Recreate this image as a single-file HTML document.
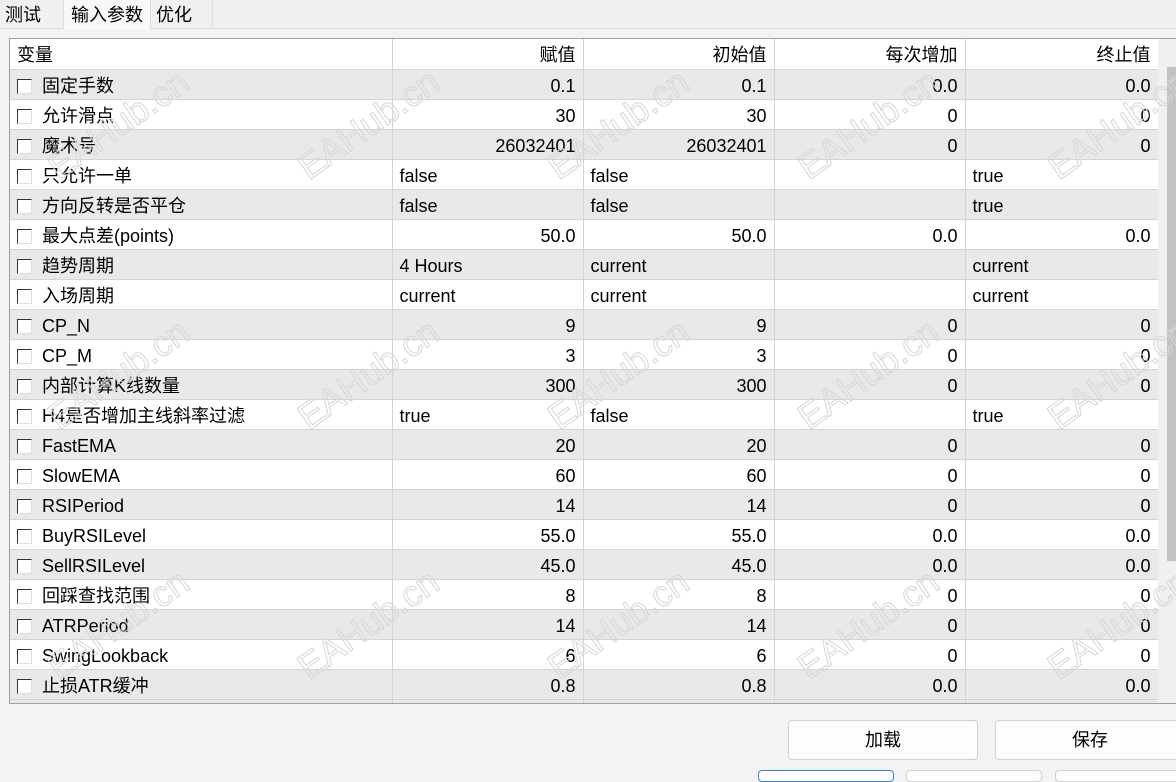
<!DOCTYPE html>
<html><head><meta charset="utf-8"><style>
*{margin:0;padding:0;box-sizing:border-box}
body{width:1176px;height:777px;background:#f3f3f3;font-family:"Liberation Sans","Noto Sans CJK SC",sans-serif;font-size:18px;color:#000;position:relative;overflow:hidden}
.tabs{position:absolute;left:0;top:0;width:1176px;height:29px;background:#f0f0f0;border-bottom:1px solid #e0e0e0}
.tab{position:absolute;top:0;height:29px;line-height:30px;padding-left:5px}
.box{position:absolute;left:9px;top:38px;width:1167px;height:666px;background:#fff;border:1px solid #a0a0a0;border-right:none;overflow:hidden}
table{border-collapse:collapse;position:absolute;left:0;top:0;table-layout:fixed}
tr{height:30px}
td{height:30px;border-right:1px solid #d4d4d4;border-bottom:1px solid #d4d4d4;padding:0 7px;white-space:nowrap;line-height:29px;vertical-align:top}
td>i{font-style:normal;position:relative;top:2px}
tr.g td{background:#e9e9e9}
td.r{text-align:right}
.cb{display:inline-block;width:15px;height:15px;border:1px solid #333;border-right-color:#ddd;border-bottom-color:#ddd;background:#fff;vertical-align:-2px;margin-right:10px}
.sb{position:absolute;left:1148px;top:0;width:19px;height:666px;background:#f0f0f0}
.th{position:absolute;left:1157px;top:28px;width:10px;height:494px;background:#c2c2c2}
.wm{position:absolute;font-size:36px;color:transparent;-webkit-text-stroke:1px #d6d6d6;transform:rotate(-35deg);transform-origin:left bottom;white-space:nowrap;pointer-events:none;font-family:"Liberation Sans",sans-serif}
.btn{position:absolute;top:720px;height:40px;background:#fdfdfd;border:1px solid #d0d0d0;border-radius:4px;text-align:center;line-height:38px}
.bt{position:absolute;top:770px;height:12px;background:#fdfdfd;border:1px solid #d0d0d0;border-radius:4px}
</style></head><body>
<div class="tabs">
<div class="tab" style="left:0;width:62px">测试</div>
<div class="tab" style="left:63px;width:88px;background:#f8f8f8;border-left:1px solid #ddd;border-right:1px solid #ddd;height:30px;padding-left:7px">输入参数</div>
<div class="tab" style="left:151px;width:62px;border-right:1px solid #ddd">优化</div>
</div>
<div class="box">
<table>
<colgroup><col style="width:382px"><col style="width:191px"><col style="width:191px"><col style="width:191px"><col style="width:193px"></colgroup>
<tr><td><i>变量</i></td><td class="r"><i>赋值</i></td><td class="r"><i>初始值</i></td><td class="r"><i>每次增加</i></td><td class="r"><i>终止值</i></td></tr>
<tr class="g"><td><i><span class="cb"></span>固定手数</i></td><td class="r"><i>0.1</i></td><td class="r"><i>0.1</i></td><td class="r"><i>0.0</i></td><td class="r"><i>0.0</i></td></tr>
<tr><td><i><span class="cb"></span>允许滑点</i></td><td class="r"><i>30</i></td><td class="r"><i>30</i></td><td class="r"><i>0</i></td><td class="r"><i>0</i></td></tr>
<tr class="g"><td><i><span class="cb"></span>魔术号</i></td><td class="r"><i>26032401</i></td><td class="r"><i>26032401</i></td><td class="r"><i>0</i></td><td class="r"><i>0</i></td></tr>
<tr><td><i><span class="cb"></span>只允许一单</i></td><td><i>false</i></td><td><i>false</i></td><td></td><td><i>true</i></td></tr>
<tr class="g"><td><i><span class="cb"></span>方向反转是否平仓</i></td><td><i>false</i></td><td><i>false</i></td><td></td><td><i>true</i></td></tr>
<tr><td><i><span class="cb"></span>最大点差(points)</i></td><td class="r"><i>50.0</i></td><td class="r"><i>50.0</i></td><td class="r"><i>0.0</i></td><td class="r"><i>0.0</i></td></tr>
<tr class="g"><td><i><span class="cb"></span>趋势周期</i></td><td><i>4 Hours</i></td><td><i>current</i></td><td></td><td><i>current</i></td></tr>
<tr><td><i><span class="cb"></span>入场周期</i></td><td><i>current</i></td><td><i>current</i></td><td></td><td><i>current</i></td></tr>
<tr class="g"><td><i><span class="cb"></span>CP_N</i></td><td class="r"><i>9</i></td><td class="r"><i>9</i></td><td class="r"><i>0</i></td><td class="r"><i>0</i></td></tr>
<tr><td><i><span class="cb"></span>CP_M</i></td><td class="r"><i>3</i></td><td class="r"><i>3</i></td><td class="r"><i>0</i></td><td class="r"><i>0</i></td></tr>
<tr class="g"><td><i><span class="cb"></span>内部计算K线数量</i></td><td class="r"><i>300</i></td><td class="r"><i>300</i></td><td class="r"><i>0</i></td><td class="r"><i>0</i></td></tr>
<tr><td><i><span class="cb"></span>H4是否增加主线斜率过滤</i></td><td><i>true</i></td><td><i>false</i></td><td></td><td><i>true</i></td></tr>
<tr class="g"><td><i><span class="cb"></span>FastEMA</i></td><td class="r"><i>20</i></td><td class="r"><i>20</i></td><td class="r"><i>0</i></td><td class="r"><i>0</i></td></tr>
<tr><td><i><span class="cb"></span>SlowEMA</i></td><td class="r"><i>60</i></td><td class="r"><i>60</i></td><td class="r"><i>0</i></td><td class="r"><i>0</i></td></tr>
<tr class="g"><td><i><span class="cb"></span>RSIPeriod</i></td><td class="r"><i>14</i></td><td class="r"><i>14</i></td><td class="r"><i>0</i></td><td class="r"><i>0</i></td></tr>
<tr><td><i><span class="cb"></span>BuyRSILevel</i></td><td class="r"><i>55.0</i></td><td class="r"><i>55.0</i></td><td class="r"><i>0.0</i></td><td class="r"><i>0.0</i></td></tr>
<tr class="g"><td><i><span class="cb"></span>SellRSILevel</i></td><td class="r"><i>45.0</i></td><td class="r"><i>45.0</i></td><td class="r"><i>0.0</i></td><td class="r"><i>0.0</i></td></tr>
<tr><td><i><span class="cb"></span>回踩查找范围</i></td><td class="r"><i>8</i></td><td class="r"><i>8</i></td><td class="r"><i>0</i></td><td class="r"><i>0</i></td></tr>
<tr class="g"><td><i><span class="cb"></span>ATRPeriod</i></td><td class="r"><i>14</i></td><td class="r"><i>14</i></td><td class="r"><i>0</i></td><td class="r"><i>0</i></td></tr>
<tr><td><i><span class="cb"></span>SwingLookback</i></td><td class="r"><i>6</i></td><td class="r"><i>6</i></td><td class="r"><i>0</i></td><td class="r"><i>0</i></td></tr>
<tr class="g"><td><i><span class="cb"></span>止损ATR缓冲</i></td><td class="r"><i>0.8</i></td><td class="r"><i>0.8</i></td><td class="r"><i>0.0</i></td><td class="r"><i>0.0</i></td></tr>
<tr class="g"><td></td><td></td><td></td><td></td><td></td></tr>
</table>
<div class="sb"></div><div class="th"></div>
</div>
<div class="wm" style="left:64px;top:146px">EAHub.cn</div>
<div class="wm" style="left:314px;top:146px">EAHub.cn</div>
<div class="wm" style="left:564px;top:146px">EAHub.cn</div>
<div class="wm" style="left:814px;top:146px">EAHub.cn</div>
<div class="wm" style="left:1064px;top:146px">EAHub.cn</div>
<div class="wm" style="left:64px;top:396px">EAHub.cn</div>
<div class="wm" style="left:314px;top:396px">EAHub.cn</div>
<div class="wm" style="left:564px;top:396px">EAHub.cn</div>
<div class="wm" style="left:814px;top:396px">EAHub.cn</div>
<div class="wm" style="left:1064px;top:396px">EAHub.cn</div>
<div class="wm" style="left:64px;top:646px">EAHub.cn</div>
<div class="wm" style="left:314px;top:646px">EAHub.cn</div>
<div class="wm" style="left:564px;top:646px">EAHub.cn</div>
<div class="wm" style="left:814px;top:646px">EAHub.cn</div>
<div class="wm" style="left:1064px;top:646px">EAHub.cn</div>
<div class="btn" style="left:788px;width:190px">加载</div>
<div class="btn" style="left:995px;width:190px">保存</div>
<div class="bt" style="left:758px;width:136px;border-color:#3b7fd0"></div>
<div class="bt" style="left:906px;width:136px"></div>
<div class="bt" style="left:1055px;width:136px"></div>
</body></html>
